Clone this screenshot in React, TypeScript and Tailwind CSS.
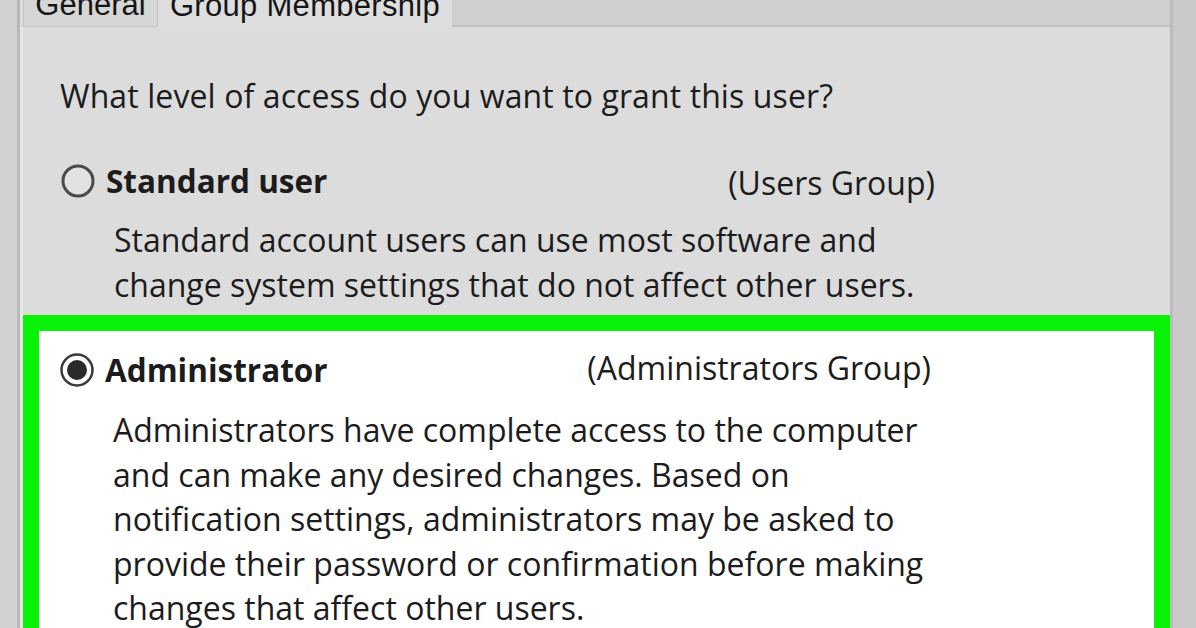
import React from "react";

const font = { fontFamily: '"Open Sans", "Noto Sans", sans-serif' };
const tabFont = { fontFamily: '"Liberation Sans", Arial, sans-serif' };

function Radio({ checked }: { checked?: boolean }) {
  return (
    <svg width="34" height="34" viewBox="0 0 34 34" className="shrink-0">
      {checked ? (
        <>
          <circle cx="17" cy="17" r="15.5" fill="#ffffff" stroke="#3a3a3a" strokeWidth="2.5" />
          <circle cx="17" cy="17" r="10" fill="#2a2a2a" />
        </>
      ) : (
        <circle cx="17" cy="17" r="15" fill="#e2e2e2" stroke="#4a4a4a" strokeWidth="3" />
      )}
    </svg>
  );
}

export default function App() {
  return (
    <div
      className="w-[1196px] h-[628px] overflow-hidden bg-[#cbcbcb] flex text-[#1c1c1c]"
      style={font}
    >
      <div className="w-[17px] shrink-0 bg-[#d2d2d4]" />
      <div className="w-[3px] shrink-0 bg-[#b9b9b9]" />
      <div className="w-[1150px] shrink-0 flex flex-col">
        <div className="h-[27px] shrink-0 flex items-end overflow-hidden" style={tabFont}>
          <div className="w-[3px] h-full bg-[#dcdcdc]" />
          <div className="w-[135px] h-full bg-[#d6d6d6] border border-t-0 border-[#c4c4c4] flex items-end justify-center overflow-hidden">
            <span className="text-[31px] leading-[31px] text-[#151515] mb-[6px]">
              General
            </span>
          </div>
          <div className="w-[294px] h-full bg-[#dedede] flex items-end justify-center overflow-hidden">
            <span className="text-[31px] leading-[31px] text-[#151515] mb-[6px] tracking-[0.3px]">
              Group Membership
            </span>
          </div>
          <div className="flex-1 h-full bg-[#cfcfcf] border-b-2 border-[#c2c2c2]" />
        </div>
        <div className="flex-1 bg-[#dcdcdc] border-l-[3px] border-[#e6e6e6] flex flex-col">
          <div className="pl-[37px] pt-[46px] text-[32px] leading-[45px] tracking-[0.1px]">
            What level of access do you want to grant this user?
          </div>
          <div className="pl-[38px] mt-[40px] w-[912px] flex items-center justify-between h-[45px]">
            <div className="flex items-center gap-[11px]">
              <Radio />
              <span className="text-[31.5px] font-bold">Standard user</span>
            </div>
            <span className="text-[32px] translate-y-[2px]">(Users Group)</span>
          </div>
          <div className="pl-[91px] mt-[14px] text-[32px] leading-[45px]">
            <div>Standard account users can use most software and</div>
            <div>change system settings that do not affect other users.</div>
          </div>
          <div className="mt-[8px] w-[1147px] flex-1 border-[16px] border-b-0 border-[#07f207] bg-white">
            <div className="pl-[21px] pt-[16px] w-[892px] flex items-center justify-between h-[61px]">
              <div className="flex items-center gap-[11px]">
                <Radio checked />
                <span className="text-[31.5px] font-bold">Administrator</span>
              </div>
              <span className="text-[32px] -translate-y-[2px]">(Administrators Group)</span>
            </div>
            <div className="pl-[74px] mt-[16px] text-[32px] leading-[44.5px]">
              <div>Administrators have complete access to the computer</div>
              <div>and can make any desired changes. Based on</div>
              <div>notification settings, administrators may be asked to</div>
              <div>provide their password or confirmation before making</div>
              <div>changes that affect other users.</div>
            </div>
          </div>
        </div>
      </div>
      <div className="w-[3px] shrink-0 bg-[#bcbcbc]" />
      <div className="flex-1 bg-[#cacaca]" />
    </div>
  );
}
